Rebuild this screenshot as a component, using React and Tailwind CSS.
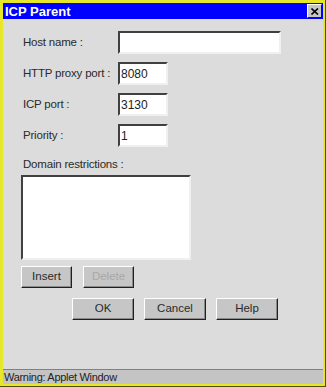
import React from 'react';

const sunken = "bg-white border-2 border-t-[#404040] border-l-[#404040] border-b-[#f0f0f0] border-r-[#f0f0f0]";
const raised = "bg-[#c6c6c6] border border-t-white border-l-white border-b-[#202020] border-r-[#202020] shadow-[inset_-1px_-1px_0_#8a8a8a]";

const Field = ({ label, value, wide }) => (
  <div className="flex items-center h-[23px]">
    <span className="w-[97px] pl-[2px] text-[11.5px] text-[#2a2a2a] tracking-[-0.2px]">{label}</span>
    <div className={`${sunken} h-[23px] ${wide ? 'w-[163px]' : 'w-[50px]'} flex items-center px-[1px] text-[12px] text-[#222]`}>
      {value}
    </div>
  </div>
);

const Btn = ({ children, w, disabled }) => (
  <button
    className={`${raised} h-[22px] ${w} text-[11.5px] leading-none ${disabled ? 'text-[#a8a8a8]' : 'text-[#2a2a2a]'}`}
  >
    {children}
  </button>
);

export default function App() {
  return (
    <div
      className="w-[326px] h-[387px] bg-[#e6e62a] pt-[3px] pl-[3px] pr-[2px] pb-[2px] flex flex-col border-b border-r border-[#505000]"
      style={{ fontFamily: '"Liberation Sans", Arial, sans-serif' }}
    >
      {/* title bar */}
      <div className="h-[16px] bg-[#0000ff] flex items-center justify-between pl-[2px] pr-[1px]">
        <span className="text-white font-bold text-[13px] leading-none">ICP Parent</span>
        <div className="w-[15px] h-[14px] bg-[#c6c6c6] border border-t-white border-l-white border-b-[#202020] border-r-[#202020] flex items-center justify-center">
          <svg width="8" height="7" viewBox="0 0 8 7">
            <path d="M0.5 0.5 L7 6.5 M7 0.5 L0.5 6.5" stroke="#000" strokeWidth="1.6" />
          </svg>
        </div>
      </div>

      {/* content */}
      <div className="flex-1 bg-[#dcdcdc] flex flex-col pl-[18px] pt-[12px]">
        <div className="flex flex-col gap-[8px]">
          <Field label="Host name :" wide value="" />
          <Field label="HTTP proxy port :" value="8080" />
          <Field label="ICP port :" value="3130" />
          <Field label="Priority :" value="1" />
        </div>

        <span className="mt-[10px] pl-[2px] text-[11.5px] text-[#2a2a2a] leading-[14px] tracking-[-0.2px]">Domain restrictions :</span>
        <div className={`${sunken} mt-[4px] w-[170px] h-[85px]`} />

        <div className="flex gap-[11px] mt-[6px]">
          <Btn w="w-[51px]">Insert</Btn>
          <Btn w="w-[51px]" disabled>Delete</Btn>
        </div>

        <div className="flex gap-[10px] mt-[10px] pl-[51px]">
          <Btn w="w-[62px]">OK</Btn>
          <Btn w="w-[62px]">Cancel</Btn>
          <Btn w="w-[62px]">Help</Btn>
        </div>
      </div>

      {/* status bar */}
      <div className="h-[15px] bg-[#c4c4c4] border-t border-[#808080] flex items-center pl-[1px] text-[11px] text-[#222] tracking-[-0.3px]">
        Warning: Applet Window
      </div>
    </div>
  );
}
